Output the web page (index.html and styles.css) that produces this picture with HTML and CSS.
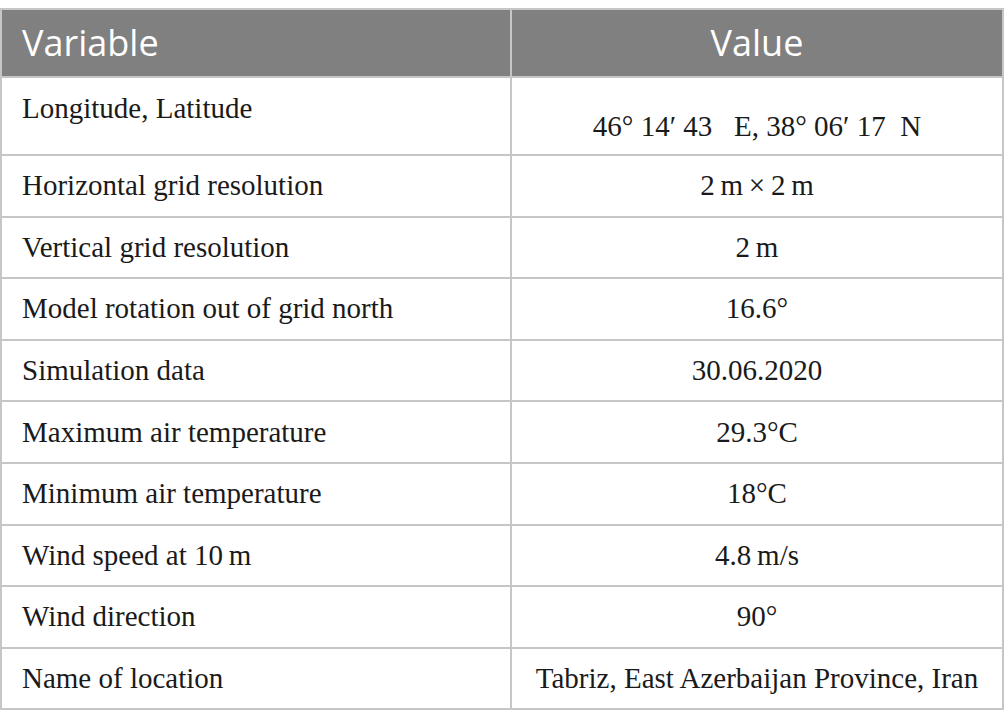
FILE: index.html
```html
<!DOCTYPE html>
<html lang="en">
<head>
    <meta charset="UTF-8">
    <title>Simulation settings</title>
    <link rel="stylesheet" href="styles.css">
</head>
<body>

<table class="settings">
    <thead>
        <tr class="head-row">
            <th class="var-col">Variable</th>
            <th class="val-col">Value</th>
        </tr>
    </thead>
    <tbody>
        <tr class="first-row">
            <td class="var-cell top">Longitude, Latitude</td>
            <td class="val-cell bottom">46° 14′ 43&nbsp;&nbsp; E, 38° 06′ 17&nbsp; N</td>
        </tr>
        <tr>
            <td class="var-cell">Horizontal grid resolution</td>
            <td class="val-cell">2&thinsp;m&thinsp;×&thinsp;2&thinsp;m</td>
        </tr>
        <tr>
            <td class="var-cell">Vertical grid resolution</td>
            <td class="val-cell">2&thinsp;m</td>
        </tr>
        <tr>
            <td class="var-cell">Model rotation out of grid north</td>
            <td class="val-cell">16.6°</td>
        </tr>
        <tr>
            <td class="var-cell">Simulation data</td>
            <td class="val-cell">30.06.2020</td>
        </tr>
        <tr>
            <td class="var-cell">Maximum air temperature</td>
            <td class="val-cell">29.3°C</td>
        </tr>
        <tr>
            <td class="var-cell">Minimum air temperature</td>
            <td class="val-cell">18°C</td>
        </tr>
        <tr>
            <td class="var-cell">Wind speed at 10&thinsp;m</td>
            <td class="val-cell">4.8&thinsp;m/s</td>
        </tr>
        <tr>
            <td class="var-cell">Wind direction</td>
            <td class="val-cell">90°</td>
        </tr>
        <tr>
            <td class="var-cell">Name of location</td>
            <td class="val-cell">Tabriz, East Azerbaijan Province, Iran</td>
        </tr>
    </tbody>
</table>

</body>
</html>
```

FILE: styles.css
```css
body {
    margin: 0;
    padding: 8px 0 0 0;
    background: #ffffff;
}
.settings {
    width: 1004px;
    border-collapse: collapse;
    font-family: "Liberation Serif", "Times New Roman", serif;
    color: #1a1a1a;
}
.settings th, .settings td {
    border: 2px solid #c6c6c6;
    padding: 0;
}
.settings tr {
    height: 61.6px;
}
.settings .head-row {
    height: 68px;
}
.settings .first-row {
    height: 78px;
}
.settings th {
    background-color: #7f807f;
    color: #ffffff;
    font-family: "Open Sans", sans-serif;
    font-weight: 400;
    font-size: 36px;
    padding-bottom: 2px;
}
.var-col {
    width: 488px;
    text-align: left;
}
.settings .var-col, .settings .var-cell {
    padding-left: 20px;
}
.val-col {
    text-align: center;
}
.settings td {
    font-size: 29px;
}
.val-cell {
    text-align: center;
}
.settings .top {
    vertical-align: top;
    padding-top: 14px;
}
.settings .bottom {
    vertical-align: bottom;
    padding-bottom: 11px;
}
```
